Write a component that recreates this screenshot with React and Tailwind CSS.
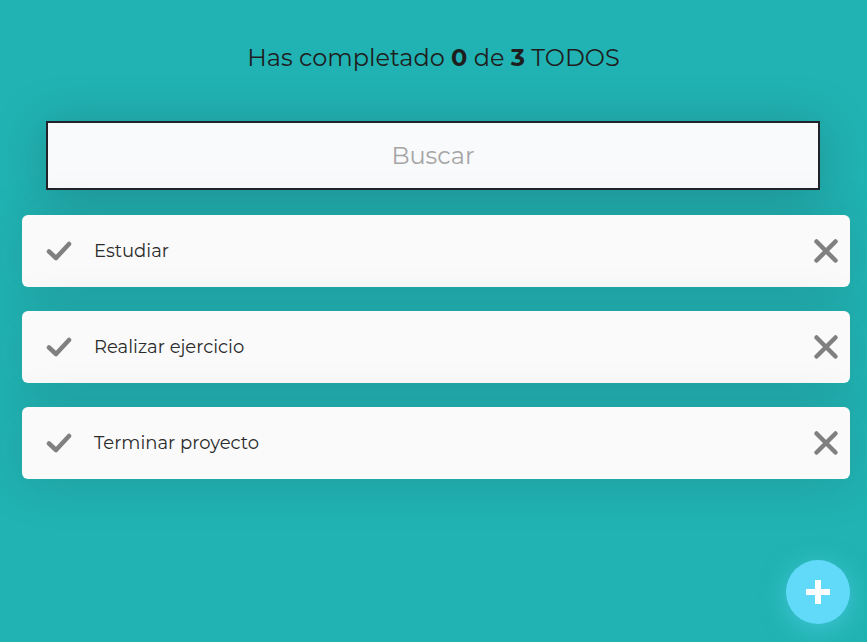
import React from 'react'

const todos = [
  { text: 'Estudiar', completed: false },
  { text: 'Realizar ejercicio', completed: false },
  { text: 'Terminar proyecto', completed: false },
]

function CheckIcon() {
  return (
    <svg width="26" height="22" viewBox="0 0 26 22" fill="none">
      <path d="M3 11.5l7 6.5L23 4" stroke="#808080" strokeWidth="4.5" strokeLinecap="round" strokeLinejoin="round" />
    </svg>
  )
}

function DeleteIcon() {
  return (
    <svg width="26" height="26" viewBox="0 0 26 26" fill="none">
      <path d="M3.5 3.5l19 19M22.5 3.5l-19 19" stroke="#808080" strokeWidth="4.5" strokeLinecap="round" />
    </svg>
  )
}

function TodoItem({ text }) {
  return (
    <li className="flex items-center h-[72px] bg-[#fafafa] rounded-[6px] shadow-[0px_5px_50px_rgba(32,35,41,0.15)]">
      <span className="w-[72px] flex justify-center pl-[1px]">
        <CheckIcon />
      </span>
      <p className="flex-1 text-[18px] text-[#2b2b2b]">{text}</p>
      <span className="w-[48px] flex justify-center">
        <DeleteIcon />
      </span>
    </li>
  )
}

export default function App() {
  const completed = todos.filter(t => t.completed).length

  return (
    <div className="min-h-[642px] w-full bg-[#21b3b3] relative font-['Montserrat','Open_Sans','Noto_Sans',sans-serif] overflow-hidden">
      <h1 className="pt-[41px] text-center text-[24px] leading-[34px] text-[#1e1e1f]">
        Has completado <b className="font-bold">{completed}</b> de <b className="font-bold">{todos.length}</b> TODOS
      </h1>

      <div className="pl-[46px] pr-[47px] mt-[46px]">
        <input
          className="block w-full h-[69px] bg-[#f9fafc] border-2 border-[#202329] text-center text-[24px] text-[#1e1e1f] placeholder:text-[#a5a5a5] outline-none shadow-[0px_5px_50px_rgba(32,35,41,0.25)]"
          placeholder="Buscar"
        />
      </div>

      <ul className="pl-[22px] pr-[17px] mt-[25px] flex flex-col gap-[24px]">
        {todos.map(todo => (
          <TodoItem key={todo.text} text={todo.text} />
        ))}
      </ul>

      <button className="absolute right-[17px] bottom-[18px] w-[64px] h-[64px] rounded-full bg-[#61dafa] flex items-center justify-center shadow-[0px_5px_25px_rgba(97,218,250,0.5)]">
        <svg width="26" height="26" viewBox="0 0 26 26">
          <path d="M13 1v24M1 13h24" stroke="#ffffff" strokeWidth="6" />
        </svg>
      </button>
    </div>
  )
}
